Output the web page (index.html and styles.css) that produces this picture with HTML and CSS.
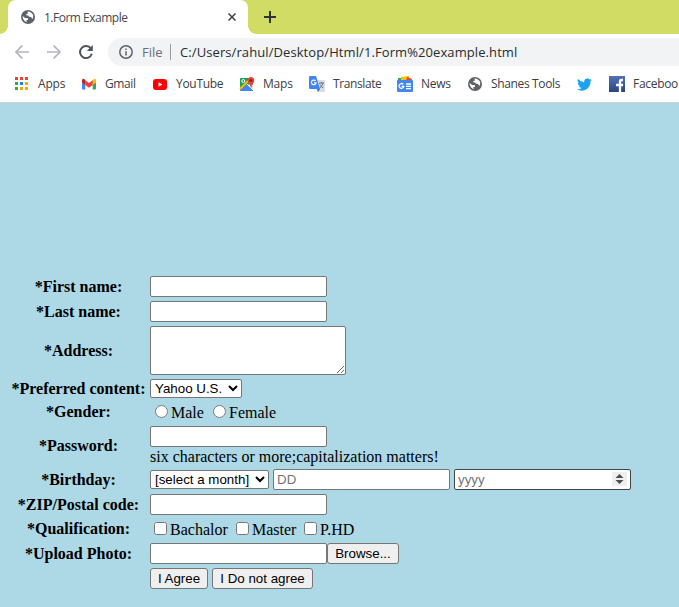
FILE: index.html
```html
<!DOCTYPE html>
<html lang="en">
<head>
<meta charset="utf-8">
<title>1.Form Example</title>
<link rel="stylesheet" href="styles.css">
</head>
<body>
<svg class="defs" width="0" height="0">
  <symbol id="globe" viewBox="0 0 14 14"><circle cx="7" cy="7" r="7" fill="#5f6368"/><path d="M1.500 6 4.200 7.900 7 8.300 7 10 5.500 10 5.500 12.200Q2 11 1.500 6ZM6.700 1.500Q10 1.300 12.200 5L12 8.800 10.600 8.100 10.200 7 8.200 6.700 7 5.500 5.300 5.300 5.300 4 6.700 3.700Z" fill="#fff"/></symbol>
</svg>
<header class="browser">
  <div class="tabs">
    <div class="tab">
      <svg class="tab-icon"><use href="#globe"/></svg>
      <span class="tab-title">1.Form Example</span>
      <svg class="close" viewBox="0 0 8 8"><path d="M.5.5 7.500 7.500M7.500.5.5 7.500"/></svg>
    </div>
    <svg class="plus" viewBox="0 0 12 12"><path d="M6 0V12M0 6H12"/></svg>
  </div>
  <nav class="toolbar">
    <svg class="nav" viewBox="0 0 14 14"><path d="M14 7H1M7.300.7 1 7 7.300 13.300"/></svg>
    <svg class="nav" viewBox="0 0 14 14"><path d="M0 7H13M6.700.7 13 7 6.700 13.300"/></svg>
    <svg class="nav reload" viewBox="0 0 14 14"><path d="M11.900 3.500A6 6 0 1 0 12.800 8.800"/><path class="tip" d="M13.800 0V6H7.800Z"/></svg>
    <div class="address">
      <svg class="info" viewBox="0 0 14 14"><circle cx="7" cy="7" r="6.200"/><path d="M7 6.200V10.500M7 3.400V5"/></svg>
      <span class="scheme">File</span><span class="divider"></span>
      <span class="url">C:/Users/rahul/Desktop/Html/1.Form%20example.html</span>
    </div>
  </nav>
  <nav class="bookmarks">
    <div class="bm apps"><svg viewBox="0 0 16 16"><path fill="#ea4335" d="M1 1h3v3H1zM6 1h3v3H6zM11 1h3v3h-3z"/><path fill="#34a853" d="M1 6h3v3H1zM1 11h3v3H1z"/><path fill="#1a83f0" d="M6 6h3v3H6z"/><path fill="#f9ab00" d="M11 6h3v3h-3zM6 11h3v3H6zM11 11h3v3h-3z"/></svg><span>Apps</span></div>
    <div class="bm gmail"><svg viewBox="0 0 16 16"><path fill="#4285f4" d="M1 4h3.300v9.500H2q-1 0-1-1z"/><path fill="#34a853" d="M11.700 4H15v8.500q0 1-1 1h-2.300z"/><path fill="#fbbc04" d="M11.700 4.600 13 3q2-.7 2 1.500v2L11.700 9z"/><path fill="#c5221f" d="M1 6.500v-2Q1.200 2 3.200 3l1.100 1v5z"/><path fill="#ea4335" d="M4.300 4.200 8 7l3.700-2.800V9L8 11.700 4.300 9z"/></svg><span>Gmail</span></div>
    <div class="bm youtube"><svg viewBox="0 0 16 16"><rect x="1" y="3" width="14" height="11" rx="3" fill="#f00"/><path d="m6.500 6.200 4 2.300-4 2.300z" fill="#fff"/></svg><span>YouTube</span></div>
    <div class="bm maps"><svg viewBox="0 0 16 16"><rect x="1" y="2" width="13" height="13" rx="1" fill="#1e9e58"/><path d="M1 14 8 8l6 6v1H2z" fill="#4285f4"/><path d="m9 9 3-2 2 2v5z" fill="#dadce0"/><path d="M1 13 9 5" stroke="#fbbc04" stroke-width="2"/><path d="m8 8 6 6" stroke="#fff"/><circle cx="4.300" cy="5" r="1.500" fill="none" stroke="#fff"/><path d="M12 12Q11.500 9 9.600 7C7.800 4 9 1 12 1s4.200 3 2.500 6Q12.500 9 12 12Z" fill="#ea4335"/><circle cx="12" cy="4.500" r="1.300" fill="#811411"/></svg><span>Maps</span></div>
    <div class="bm translate"><svg viewBox="0 0 16 16"><path d="M6 4h9q1 0 1 1v10q0 1-1 1H9z" fill="#dadce0"/><path d="M10 7h5M12.500 6v1M14 7q-1 3-3 5M11 8.500l3 3.500" fill="none" stroke="#66777f"/><path d="M1 0h6l4 13H1q-1 0-1-1V1q0-1 1-1z" fill="#4285f4"/><path d="M8 13h3l-2 3z" fill="#3367d6"/><path d="M6.500 4.900A2.300 2.300 0 1 0 7 6.800H5" fill="none" stroke="#fff" stroke-width="1.200"/></svg><span>Translate</span></div>
    <div class="bm news"><svg viewBox="0 0 16 16"><path d="M1 2h9v4H1z" fill="#34a853"/><path d="m4 1 8-1v6H4z" fill="#fbbc04"/><path d="m10 1 5 2-1 3H9z" fill="#ea4335"/><rect y="4" width="16" height="12" rx="1" fill="#4285f4"/><path d="M6.200 8.300A2.400 2.400 0 1 0 6.800 10.300H4.500M9 8h5M9 10.300h5M9 12.600h5" fill="none" stroke="#fff" stroke-width="1.300"/></svg><span>News</span></div>
    <div class="bm shanes"><svg viewBox="-1 -1 16 16"><use href="#globe" width="14" height="14"/></svg><span>Shanes Tools</span></div>
    <div class="bm twitter"><svg viewBox="0 0 24 24"><path fill="#1da1f2" d="M23.900 4.600a10 10 0 0 1-2.800.8 5 5 0 0 0 2.100-2.700 10 10 0 0 1-3.100 1.200 4.900 4.900 0 0 0-8.400 4.500A14 14 0 0 1 1.700 3.100a4.900 4.900 0 0 0 1.500 6.600 5 5 0 0 1-2.200-.6 4.900 4.900 0 0 0 3.900 4.900 5 5 0 0 1-2.200.1 4.900 4.900 0 0 0 4.600 3.400A9.900 9.900 0 0 1 0 19.500 14 14 0 0 0 21.500 7.100a10 10 0 0 0 2.400-2.500z"/></svg></div>
    <div class="bm facebook"><svg viewBox="0 0 16 16"><defs><linearGradient id="fb" x2="0" y2="1"><stop stop-color="#5472b8"/><stop offset="1" stop-color="#294480"/></linearGradient></defs><path fill="url(#fb)" d="M0 0h16v16H0z"/><path d="M14 4h-1.500Q11 4 11 6v10M7 9h7" fill="none" stroke="#fff" stroke-width="2.300"/></svg><span>Faceboo</span></div>
  </nav>
</header>
<form class="form">
  <label>*First name:</label><div><input class="field" type="text"></div>
  <label>*Last name:</label><div><input class="field" type="text"></div>
  <label>*Address:</label><div><textarea class="area"></textarea></div>
  <label>*Preferred content:</label><div><select class="content"><option>Yahoo U.S.</option></select></div>
  <label>*Gender:</label><div class="choices"><input class="radio" type="radio" name="gender"><span class="male">Male</span><input class="radio" type="radio" name="gender"><span>Female</span></div>
  <label>*Password:</label><div class="password"><input class="field" type="password"><span>six characters or more;capitalization matters!</span></div>
  <label>*Birthday:</label><div class="birthday"><select class="month"><option>[select a month]</option></select><input class="field" type="text" placeholder="DD"><span class="year"><input class="field" type="text" placeholder="yyyy"><svg class="spinner" viewBox="0 0 15 14"><path d="M3.500 6 7.500 2 11.500 6zM3.500 8h8l-4 4z"/></svg></span></div>
  <label>*ZIP/Postal code:</label><div><input class="field" type="text"></div>
  <label>*Qualification:</label><div class="choices"><input class="check" type="checkbox"><span class="bachelor">Bachalor</span><input class="check" type="checkbox"><span class="master">Master</span><input class="check" type="checkbox"><span>P.HD</span></div>
  <label>*Upload Photo:</label><div><input class="field" type="text"><button class="browse" type="button">Browse...</button></div>
  <span></span><div class="actions"><button class="agree" type="button">I Agree</button><button class="disagree" type="button">I Do not agree</button></div>
</form>
</body>
</html>
```
FILE: styles.css
```css
* { box-sizing: border-box; }
body { margin: 0; height: 607px; overflow: hidden; background: #add8e6; font: 16px "Liberation Serif", serif; color: #000; }
svg { display: block; flex: none; }
.defs { position: absolute; }
.browser { height: 103px; background: #fff; border-bottom: 1px solid #d0d5d8; font-family: "Open Sans", sans-serif; overflow: hidden; }
.tabs { height: 34px; background: #d0dc64; display: flex; padding-left: 8px; }
.tab { width: 240px; height: 34px; background: #fff; border-radius: 8px 8px 0 0; display: flex; align-items: center; padding: 0 12px 0 13px; position: relative; }
.tab::before, .tab::after { content: ""; position: absolute; bottom: 0; width: 8px; height: 8px; }
.tab::before { left: -8px; background: radial-gradient(circle at 0 0, transparent 7.5px, #fff 8px); }
.tab::after { right: -8px; background: radial-gradient(circle at 100% 0, transparent 7.5px, #fff 8px); }
.tab-icon { width: 14px; height: 14px; }
.tab-title { margin-left: 9px; font-size: 12px; letter-spacing: -.5px; color: #45494d; white-space: nowrap; flex: 1; }
.close { width: 8px; height: 8px; fill: none; stroke: #3c4043; stroke-width: 1.5; }
.plus { width: 12px; height: 12px; margin: 11px 0 0 16px; fill: none; stroke: #303336; stroke-width: 2; }
.toolbar { height: 35px; display: flex; align-items: center; padding-left: 15px; }
.nav { width: 14px; height: 14px; margin-right: 18px; fill: none; stroke: #b5b7ba; stroke-width: 1.7; }
.reload { margin-right: 15px; stroke: #505458; stroke-width: 2; }
.tip { fill: #505458; stroke: none; }
.address { flex: 1; height: 28px; margin-top: 1px; background: #f1f3f4; border-radius: 14px 0 0 14px; display: flex; align-items: center; padding-left: 11px; white-space: nowrap; }
.info { width: 14px; height: 14px; fill: none; stroke: #5f6368; stroke-width: 1.5; }
.scheme { width: 28px; margin-left: 9px; font-size: 13px; color: #6b6f73; }
.divider { width: 1px; height: 16px; background: #999da1; }
.url { margin-left: 9px; font-size: 13px; letter-spacing: .09px; color: #292c2f; }
.bookmarks { height: 30px; display: flex; align-items: center; padding-left: 14px; font-size: 12px; color: #3c4043; white-space: nowrap; }
.bm { display: flex; align-items: center; flex: none; }
.bm svg { width: 16px; height: 16px; margin-right: 8px; }
.bm span { margin-top: -1px; }
.apps { width: 67px; letter-spacing: -.2px; }
.gmail { width: 71px; letter-spacing: -.4px; }
.youtube { width: 87px; letter-spacing: -.3px; }
.maps { width: 70px; letter-spacing: -.2px; }
.translate { width: 88px; letter-spacing: -.4px; }
.news { width: 70px; letter-spacing: -.3px; }
.shanes { width: 110px; letter-spacing: -.35px; }
.twitter { width: 32px; }
.facebook { letter-spacing: -.3px; }
.twitter svg { width: 15px; height: 15px; }
.form { display: grid; grid-template-columns: 135px 500px; grid-template-rows: 21px 21px 49px 19px 20px 39px 21px 21px 20px 21px 21px; gap: 4px; padding: 173px 0 0 11px; }
.form > label { font-weight: bold; text-align: center; align-self: center; line-height: 18px; white-space: nowrap; }
.form > div { display: flex; min-height: 0; }
input, select, button, textarea { font: 13.333px "Liberation Sans", sans-serif; margin: 0; }
.field { flex: none; width: 177px; height: 21px; padding: 1px 3px; border: 1px solid #767676; border-radius: 2px; background: #fff; }
.area { width: 196px; height: 49px; border: 1px solid #767676; border-radius: 2px; resize: both; }
select { height: 19px; border: 1px solid #767676; border-radius: 2px; background-color: #fff; color: #000; }
.content { width: 92px; }
.month { width: 119px; }
.choices { align-items: center; line-height: 20px; padding-left: 5px; }
.radio, .check { width: 13px; height: 13px; flex: none; margin: 0 3px 1px 0; }
.choices span { padding-top: 2px; }
.male { width: 42px; }
.check + span { margin-right: -1px; }
.bachelor { width: 67px; }
.master { width: 53px; }
.choices .check:first-child { margin-left: -1px; }
.password { flex-direction: column; }
.password span { line-height: 20px; }
.birthday { gap: 4px; align-items: center; }
.year { position: relative; display: flex; }
.year .field { border-color: #454545; }
.spinner { position: absolute; right: 4px; top: 3px; width: 15px; height: 14px; background: #efefef; fill: #4d4d4d; }
button { height: 21px; padding: 0; border: 1px solid #767676; border-radius: 3px; background: #efefef; color: #000; white-space: nowrap; }
.browse { width: 72px; }
.agree { width: 58px; }
.disagree { width: 101px; }
.actions { gap: 4px; }
```
